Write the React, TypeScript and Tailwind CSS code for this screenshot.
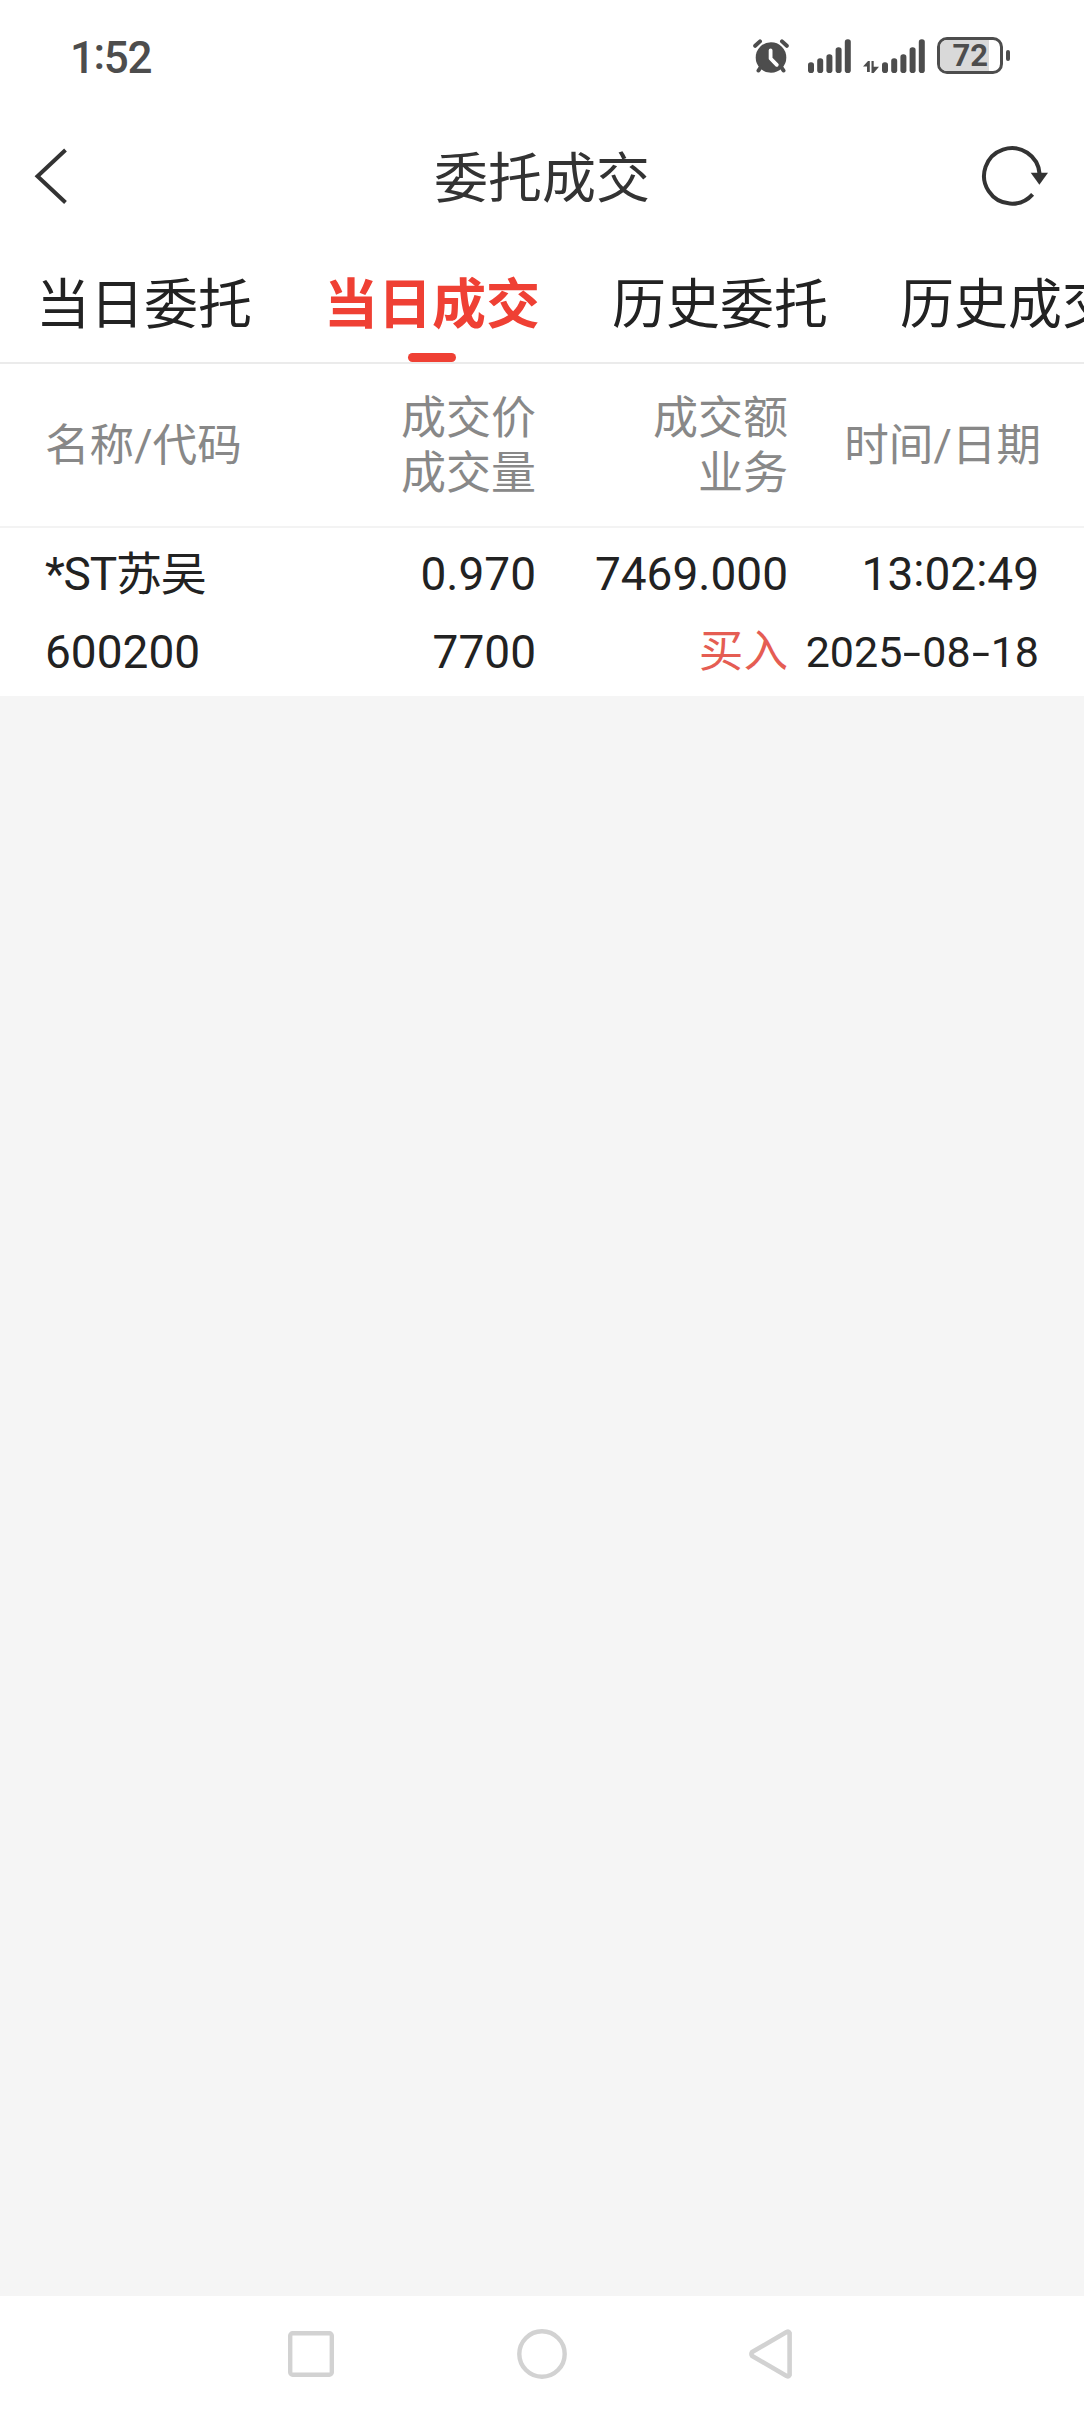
import React from "react";

const TABS = ["当日委托", "当日成交", "历史委托", "历史成交"];
const ACTIVE_TAB = "当日成交";

const COLUMNS = [
  { lines: ["名称/代码"], className: "text-left text-[44.6px]" },
  { lines: ["成交价", "成交量"], className: "text-right" },
  { lines: ["成交额", "业务"], className: "text-right" },
  { lines: ["时间/日期"], className: "-mr-0.5 text-right text-[44.6px]" },
];

const DEALS = [
  {
    name: "*ST苏吴",
    code: "600200",
    price: "0.970",
    volume: "7700",
    amount: "7469.000",
    side: "买入",
    time: "13:02:49",
    date: "2025-08-18",
  },
];

const GRID = "grid grid-cols-[245px_246px_252px_251px] pl-[45px]";

// colons sit at digit mid-height
function Clock({ value }: { value: string }) {
  return (
    <>
      {value.split(":").map((part, i) => (
        <React.Fragment key={i}>
          {i > 0 && <span className="align-[4px] leading-none">:</span>}
          {part}
        </React.Fragment>
      ))}
    </>
  );
}

// wide hyphens between the date parts
function DateText({ value }: { value: string }) {
  return (
    <>
      {value.split("-").map((part, i) => (
        <React.Fragment key={i}>
          {i > 0 && <span className="inline-block w-[20px] scale-x-150 text-center">-</span>}
          {part}
        </React.Fragment>
      ))}
    </>
  );
}

function SignalBars() {
  const heights = [10.7, 14.7, 18.7, 25.7, 33.7];
  return (
    <svg width="43" height="34" viewBox="0 0 43 34" fill="#4d4d4d">
      {heights.map((h, i) => (
        <rect key={h} x={i * 9.2} y={34 - h} width="6" height={h} rx="2.8" />
      ))}
    </svg>
  );
}

function AlarmIcon() {
  return (
    <svg width="36" height="34" viewBox="0 0 36 34" fill="none" strokeLinecap="round">
      <circle cx="18" cy="18.5" r="15.3" fill="#4d4d4d" />
      <path d="M2.2 6.8 7 2.4M33.8 6.8 29 2.4M7.5 28.5 5.5 31.5M28.5 28.5l2 3" stroke="#4d4d4d" strokeWidth="4" />
      <path d="M17.6 11.3v8.2l6.2 6.3" stroke="#fff" strokeWidth="3.8" strokeLinejoin="round" />
    </svg>
  );
}

function StatusBar() {
  return (
    <div className="flex h-[116px] items-start justify-between pl-[70px] pr-[74px] pt-[37px] text-[#4d4d4d]">
      <div className="-mt-[5px] font-['Roboto','Noto_Sans_CJK_SC',sans-serif] text-[44px] font-medium leading-[40px] tracking-[-1.4px]">
        <Clock value="1:52" />
      </div>
      <div className="flex h-[37px] items-center">
        <AlarmIcon />
        <div className="ml-[19px]">
          <SignalBars />
        </div>
        <svg className="ml-3 mt-[22px]" width="16" height="12" viewBox="0 0 16 12" fill="#4d4d4d">
          <path d="M0 5.5 5 0h1.8v11H4V5.5zM8.5 0h2.2v5.8H16L10.7 12H8.5z" />
        </svg>
        <div className="ml-[3px]">
          <SignalBars />
        </div>
        <div className="ml-3 flex items-center gap-[3px]">
          <div className="h-[37px] w-[66px] overflow-hidden rounded-[10px] border-[3px] border-[#4d4d4d]">
            <div className="flex h-full w-[49px] items-center justify-end bg-[#d9d9d9] pr-px font-['Roboto',sans-serif] text-[31px] font-bold leading-none">
              72
            </div>
          </div>
          <div className="h-[11px] w-1 rounded-full bg-[#4d4d4d]" />
        </div>
      </div>
    </div>
  );
}

function Header() {
  return (
    <header className="flex h-[120px] items-center justify-between pl-[34px] pr-[34px] text-[#333]">
      <button aria-label="back" className="w-[70px]">
        <svg width="34" height="58" viewBox="0 0 34 58" fill="none" stroke="currentColor" strokeWidth="4">
          <path d="M31.5 3 3.5 29.2 31.5 55.5" />
        </svg>
      </button>
      <h1 className="pt-2 text-[54px] leading-[60px]">委托成交</h1>
      <button aria-label="refresh">
        <svg width="70" height="64" viewBox="0 0 70 64" fill="none">
          <path d="M59.6 30A27.8 27.8 0 1 0 52.6 50.4" stroke="currentColor" strokeWidth="4" />
          <path d="M50.7 28.7H68L59.4 40.7z" fill="currentColor" />
        </svg>
      </button>
    </header>
  );
}

function Tabs() {
  return (
    <nav className="flex h-32 gap-[72px] overflow-hidden border-b-2 border-[#ebebeb] pl-9">
      {TABS.map((tab) => {
        const active = tab === ACTIVE_TAB;
        return (
          <button
            key={tab}
            className={`flex shrink-0 flex-col items-center justify-between whitespace-nowrap pt-[40px] text-[54px] leading-[60px] ${
              active ? "font-bold text-[#ef4034]" : "text-[#222]"
            }`}
          >
            <span>{tab}</span>
            {active && <span className="h-[9px] w-12 rounded-full bg-[#ef4034]" />}
          </button>
        );
      })}
    </nav>
  );
}

function DealTable() {
  return (
    <section>
      <div className={`${GRID} h-[164px] items-center border-b-2 border-[#f3f3f3] pt-[2px] text-[45px] leading-[55px] text-[#888]`}>
        {COLUMNS.map(({ lines, className }) => (
          <div key={lines[0]} className={`whitespace-nowrap ${className}`}>
            {lines.map((line) => (
              <div key={line}>{line}</div>
            ))}
          </div>
        ))}
      </div>
      {DEALS.map((deal) => (
        <div key={deal.code + deal.time} className={`${GRID} h-[168px] whitespace-nowrap pt-[7px] text-right text-[46px] leading-[78px] text-[#222]`}>
          <div className="text-left">
            <div className="tracking-[-1.2px]">{deal.name}</div>
            <div>{deal.code}</div>
          </div>
          <div>
            <div>{deal.price}</div>
            <div>{deal.volume}</div>
          </div>
          <div>
            <div>{deal.amount}</div>
            <div className="text-[44.6px] text-[#e55d53]">{deal.side}</div>
          </div>
          <div>
            <div>
              <Clock value={deal.time} />
            </div>
            <div className="text-[43px]">
              <DateText value={deal.date} />
            </div>
          </div>
        </div>
      ))}
    </section>
  );
}

function SystemNav() {
  return (
    <div className="flex h-[116px] items-center justify-between bg-white pl-[288px] pr-[292px]">
      <svg width="46" height="46" viewBox="0 0 46 46" fill="none" stroke="#d2d2d2" strokeWidth="4.4">
        <rect x="2.2" y="2.2" width="41.6" height="41.6" rx="2.5" />
      </svg>
      <svg width="50" height="50" viewBox="0 0 50 50" fill="none" stroke="#d2d2d2" strokeWidth="4.4">
        <circle cx="25" cy="25" r="22.7" />
      </svg>
      <svg width="43" height="50" viewBox="0 0 43 50" fill="none" stroke="#d2d2d2" strokeWidth="4.6" strokeLinejoin="round">
        <path d="M40.6 4v42q-1 2-3 1L3.2 27q-1.5-2 0-4L37.6 3q2-1 3 1z" />
      </svg>
    </div>
  );
}

export default function App() {
  return (
    <div className="flex h-[2412px] w-[1084px] flex-col overflow-hidden bg-[#f5f5f5] font-['Roboto','Noto_Sans_CJK_SC',sans-serif]">
      <div className="bg-white">
        <StatusBar />
        <Header />
        <Tabs />
        <DealTable />
      </div>
      <main className="flex-1" />
      <SystemNav />
    </div>
  );
}
